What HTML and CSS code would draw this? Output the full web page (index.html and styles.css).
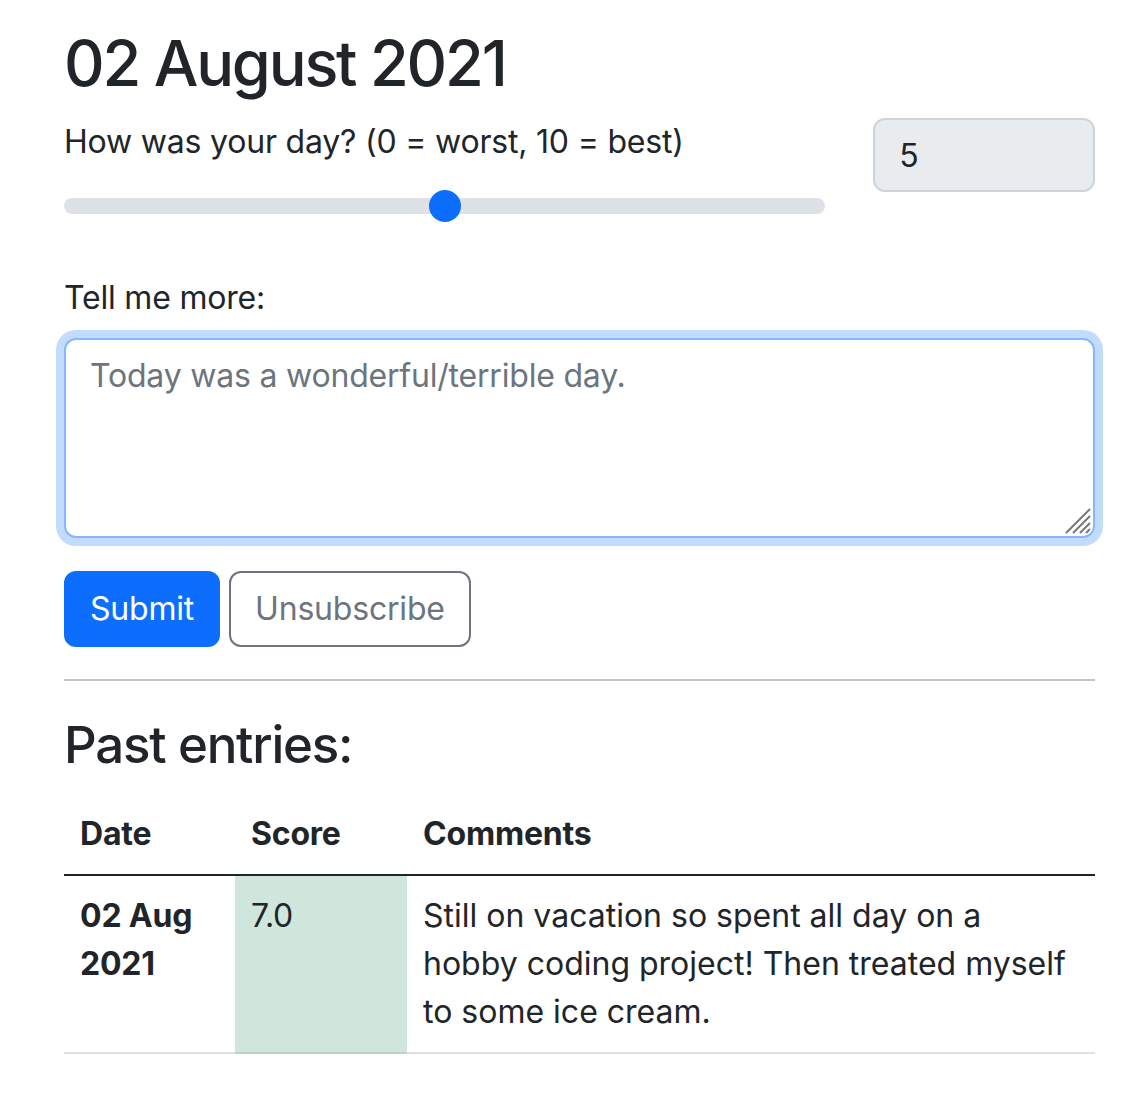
FILE: index.html
```html
<!DOCTYPE html>
<html lang="en">
<head>
<meta charset="utf-8">
<title>Diary</title>
<link rel="stylesheet" href="styles.css">
</head>
<body>
<main class="container">
  <h1 class="title">02 August 2021</h1>
  <form class="entry-form">
    <div class="score-row">
      <div class="score-main">
        <label class="form-label" for="score">How was your day? (0 = worst, 10 = best)</label>
        <input class="range" type="range" id="score" min="0" max="10" value="5">
      </div>
      <div class="score-side">
        <input class="score-value" type="text" value="5" readonly>
      </div>
    </div>
    <div class="more">
      <label class="form-label" for="comments">Tell me more:</label>
      <div class="textarea-wrap">
        <textarea class="textarea is-focused" id="comments" placeholder="Today was a wonderful/terrible day."></textarea>
        <svg class="resize-grip" width="26" height="26" viewBox="0 0 26 26" aria-hidden="true">
          <g stroke="#777" stroke-width="2" stroke-linecap="butt">
            <line x1="1" y1="25" x2="25" y2="1"/>
            <line x1="8" y1="25" x2="25" y2="8"/>
            <line x1="15" y1="25" x2="25" y2="15"/>
            <line x1="21" y1="25" x2="25" y2="21"/>
          </g>
        </svg>
      </div>
    </div>
    <div class="actions">
      <button type="button" class="btn btn-primary">Submit</button>
      <button type="button" class="btn btn-outline">Unsubscribe</button>
    </div>
  </form>
  <hr class="divider">
  <h2 class="subtitle">Past entries:</h2>
  <table class="entries">
    <colgroup>
      <col class="col-date">
      <col class="col-score">
      <col class="col-comments">
    </colgroup>
    <thead>
      <tr>
        <th>Date</th>
        <th>Score</th>
        <th>Comments</th>
      </tr>
    </thead>
    <tbody>
      <tr>
        <th scope="row">02 Aug 2021</th>
        <td class="cell-success">7.0</td>
        <td class="cell-comments">Still on vacation so spent all day on a hobby coding project! Then treated myself to some ice cream.</td>
      </tr>
    </tbody>
  </table>
</main>
</body>
</html>
```

FILE: styles.css
```css
* { box-sizing: border-box; }

html, body {
  margin: 0;
  padding: 0;
  background: #fff;
}

body {
  font-family: Inter, "Noto Sans", "Liberation Sans", sans-serif;
  font-size: 32px;
  line-height: 48px;
  letter-spacing: -0.2px;
  color: #212529;
}

.container {
  margin: 0 45px 0 64px;
  padding-top: 25px;
}

.title {
  font-size: 63px;
  font-weight: 500;
  line-height: 77px;
  margin: 0 0 16px;
  letter-spacing: -2.2px;
}

.entry-form { margin: 0; }

.score-row {
  display: flex;
  gap: 48px;
}

.score-main { width: 762px; }
.score-side { width: 222px; }

.form-label {
  display: block;
  margin-bottom: 16px;
}

.range {
  -webkit-appearance: none;
  appearance: none;
  display: block;
  width: 100%;
  height: 48px;
  margin: 0;
  padding: 0;
  background: transparent;
}

.range::-webkit-slider-runnable-track {
  height: 16px;
  background: #dee2e6;
  border-radius: 16px;
}

.range::-webkit-slider-thumb {
  -webkit-appearance: none;
  appearance: none;
  width: 32px;
  height: 32px;
  margin-top: -8px;
  border: 0;
  border-radius: 50%;
  background: #0d6efd;
}

.score-value {
  display: block;
  width: 100%;
  height: 74px;
  padding: 12px 24px;
  font: inherit;
  letter-spacing: inherit;
  color: #212529;
  background: #e9ecef;
  border: 2px solid #ced4da;
  border-radius: 12px;
  outline: none;
}

.more { margin-top: 44px; }

.textarea-wrap {
  position: relative;
}

.textarea {
  display: block;
  width: 100%;
  height: 200px;
  padding: 12px 24px;
  font: inherit;
  letter-spacing: inherit;
  color: #212529;
  background: #fff;
  border: 2px solid #ced4da;
  border-radius: 12px;
  resize: none;
  outline: none;
}

.textarea::placeholder { color: #6c757d; opacity: 1; }

.textarea.is-focused {
  border-color: #86b7fe;
  box-shadow: 0 0 0 8px rgba(13, 110, 253, 0.25);
}

.resize-grip {
  position: absolute;
  right: 4px;
  bottom: 4px;
  pointer-events: none;
}

.actions {
  display: flex;
  gap: 9px;
  margin-top: 33px;
}

.btn {
  font: inherit;
  letter-spacing: inherit;
  line-height: 48px;
  padding: 12px 24px;
  border: 2px solid transparent;
  border-radius: 12px;
  background: transparent;
  cursor: pointer;
}

.btn-primary {
  background: #0d6efd;
  border-color: #0d6efd;
  color: #fff;
}

.btn-outline {
  border-color: #6c757d;
  color: #6c757d;
}

.divider {
  margin: 32px 0;
  border: 0;
  border-top: 2px solid #c4c4c4;
  height: 0;
}

.subtitle {
  font-size: 51px;
  font-weight: 500;
  line-height: 63px;
  margin: 0 0 18px;
  letter-spacing: -1.2px;
}

.entries {
  width: 100%;
  border-collapse: collapse;
  table-layout: fixed;
}

.col-date { width: 171px; }
.col-score { width: 172px; }

.entries th,
.entries td {
  padding: 16px;
  text-align: left;
  vertical-align: top;
}

.entries th { font-weight: 700; }

.entries thead th {
  border-bottom: 2px solid #212529;
}

.entries tbody th,
.entries tbody td {
  border-bottom: 2px solid #dee2e6;
  font-weight: 400;
}

.entries tbody th { font-weight: 700; }

.cell-comments { letter-spacing: 0; }

.cell-success {
  background: #cfe6dc;
  border-bottom-color: #bcd0c7 !important;
}
```
